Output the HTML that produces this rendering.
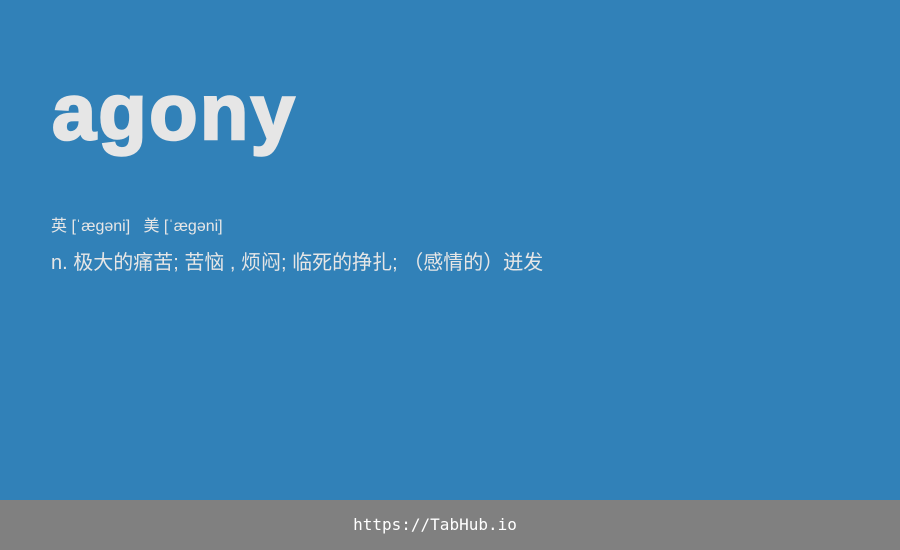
<!DOCTYPE html>
<html><head><meta charset="utf-8"><style>
body{margin:0;width:900px;height:550px;background:#3181b8;position:relative;overflow:hidden;font-family:"Liberation Sans","Noto Sans CJK SC",sans-serif;color:#e6e6e6}
.w{position:absolute;left:52px;top:62px;font-size:79px;font-weight:bold;letter-spacing:2.5px;line-height:100px;-webkit-text-stroke:2.5px #e6e6e6}
.p{position:absolute;left:51px;top:212px;font-size:16px}
.d{position:absolute;left:51px;top:246px;font-size:20px}
.f{position:absolute;left:0;top:500px;width:870px;height:50px;color:#fff;font-family:"DejaVu Sans Mono",monospace;font-size:16px;line-height:50px;text-align:center}
.fb{position:absolute;left:0;top:500px;width:900px;height:50px;background:#808080}
</style></head><body>
<div class="w">agony</div>
<div class="p">英 [ˈæɡəni] &nbsp; 美 [ˈæɡəni]</div>
<div class="d">n. 极大的痛苦; 苦恼 , 烦闷; 临死的挣扎; （感情的）迸发</div>
<div class="fb"></div>
<div class="f">https://TabHub.io</div>
</body></html>
